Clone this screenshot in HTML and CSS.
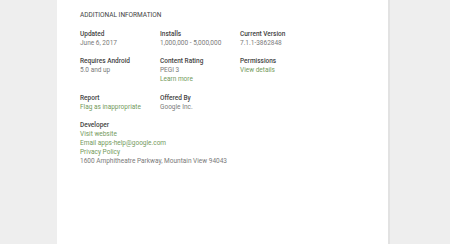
FILE: index.html
```html
<!DOCTYPE html>
<html lang="en">
<head>
    <meta charset="UTF-8">
    <meta name="viewport" content="width=device-width, initial-scale=1.0">
    <title>Additional Information</title>
    <link rel="stylesheet" href="styles.css">
</head>
<body>
    <main class="card">
        <h2 class="heading">ADDITIONAL INFORMATION</h2>

        <div class="info-grid">
            <div class="info">
                <div class="title">Updated</div>
                <div class="content">June 6, 2017</div>
            </div>
            <div class="info">
                <div class="title">Installs</div>
                <div class="content">1,000,000 - 5,000,000</div>
            </div>
            <div class="info">
                <div class="title">Current Version</div>
                <div class="content">7.1.1-3862848</div>
            </div>

            <div class="info">
                <div class="title">Requires Android</div>
                <div class="content">5.0 and up</div>
            </div>
            <div class="info">
                <div class="title">Content Rating</div>
                <div class="content">PEGI 3</div>
                <a class="link" href="#">Learn more</a>
            </div>
            <div class="info">
                <div class="title">Permissions</div>
                <a class="link" href="#">View details</a>
            </div>

            <div class="info">
                <div class="title">Report</div>
                <a class="link" href="#">Flag as inappropriate</a>
            </div>
            <div class="info">
                <div class="title">Offered By</div>
                <div class="content">Google Inc.</div>
            </div>
            <div class="info"></div>

            <div class="info wide">
                <div class="title">Developer</div>
                <a class="link" href="#">Visit website</a>
                <a class="link" href="#">Email apps-help@google.com</a>
                <a class="link" href="#">Privacy Policy</a>
                <div class="content">1600 Amphitheatre Parkway, Mountain View 94043</div>
            </div>
        </div>
    </main>
</body>
</html>
```

FILE: styles.css
```css
/* Page */
body {
    margin: 0;
    background-color: #eeeeee;
    font-family: Roboto, "Liberation Sans", Arial, sans-serif;
    font-size: 6.5px;
    line-height: 9px;
}

.card {
    margin-left: 57px;
    width: 333px;
    min-height: 244px;
    box-sizing: border-box;
    padding: 11px 0 0 23px;
    background-color: #ffffff;
    border-right: 2px solid #e2e2e2;
}

.heading {
    margin: 0 0 9.5px;
    font-size: 6.5px;
    font-weight: 400;
    line-height: 9px;
    color: #444444;
}

/* Grid of details */
.info-grid {
    display: grid;
    grid-template-columns: 80px 80px 80px;
    row-gap: 9.5px;
}

.info.wide {
    grid-column: 1 / -1;
}

.title {
    font-weight: 500;
    color: #444444;
}

.content {
    color: #7a7a7a;
}

.link {
    display: block;
    color: #739a5c;
    text-decoration: none;
}
```
